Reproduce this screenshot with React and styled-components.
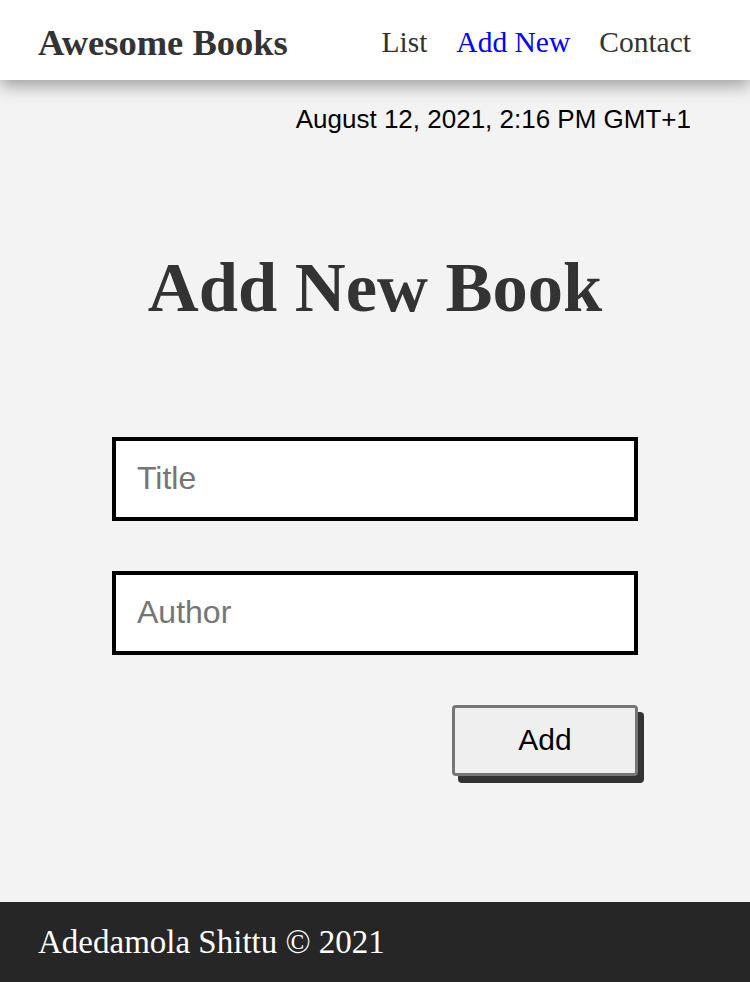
import React from "react";
import styled, { createGlobalStyle } from "styled-components";

const Global = createGlobalStyle`
  * { box-sizing: border-box; }
  html, body { margin: 0; padding: 0; }
  body { background: #f3f3f3; font-family: "Liberation Serif", Georgia, serif; }
`;

const Page = styled.div`
  min-height: 100vh;
  display: flex;
  flex-direction: column;
`;

const Header = styled.header`
  height: 80px;
  background: #fff;
  display: flex;
  align-items: center;
  justify-content: space-between;
  padding: 4px 59px 0 38px;
  box-shadow: 0 6px 16px rgba(0, 0, 0, 0.35);
  position: relative;
  z-index: 1;
`;

const Logo = styled.h1`
  margin: 0;
  font-family: "Liberation Serif", serif;
  font-weight: 700;
  font-size: 36.5px;
  color: #333;
`;

const Nav = styled.nav`
  display: flex;
  gap: 29px;
`;

const NavLink = styled.a`
  font-family: "Liberation Serif", serif;
  font-size: 29.5px;
  color: ${(p) => (p.$active ? "#0000ff" : "#333")};
  text-decoration: none;
`;

const Main = styled.main`
  flex: 1;
  padding: 0 59px 0 38px;
  display: flex;
  flex-direction: column;
`;

const DateLine = styled.p`
  margin: 24px 0 0;
  text-align: right;
  font-family: "Liberation Sans", Arial, sans-serif;
  font-size: 26px;
  color: #000;
`;

const Heading = styled.h2`
  margin: 117px 0 0;
  text-align: center;
  font-family: "Liberation Serif", serif;
  font-weight: 700;
  font-size: 70.5px;
  line-height: 1;
  color: #333;
  padding-left: 21px;
`;

const Form = styled.form`
  align-self: center;
  margin: 114px 0 0 21px;
  width: 526px;
  display: flex;
  flex-direction: column;
  gap: 50px;
`;

const Input = styled.input`
  height: 84px;
  border: 4px solid #000;
  background: #fff;
  padding: 0 21px;
  font-family: "Liberation Sans", Arial, sans-serif;
  font-size: 32px;
  color: #000;
  outline: none;
  &::placeholder { color: #757575; }
`;

const ButtonRow = styled.div`
  display: flex;
  justify-content: flex-end;
`;

const Button = styled.button`
  width: 186px;
  height: 71px;
  border: 3px solid #767676;
  border-radius: 4px;
  background: #efefef;
  box-shadow: 6px 7px 0 #333;
  font-family: "Liberation Sans", Arial, sans-serif;
  font-size: 30px;
  color: #000;
  cursor: pointer;
`;

const Footer = styled.footer`
  height: 80px;
  background: #262626;
  display: flex;
  align-items: center;
  padding-left: 38px;
  font-family: "Liberation Serif", serif;
  font-size: 33px;
  color: #fff;
`;

export default function App() {
  return (
    <Page>
      <Global />
      <Header>
        <Logo>Awesome Books</Logo>
        <Nav>
          <NavLink href="#list">List</NavLink>
          <NavLink href="#add" $active>Add New</NavLink>
          <NavLink href="#contact">Contact</NavLink>
        </Nav>
      </Header>
      <Main>
        <DateLine>August 12, 2021, 2:16 PM GMT+1</DateLine>
        <Heading>Add New Book</Heading>
        <Form onSubmit={(e) => e.preventDefault()}>
          <Input placeholder="Title" />
          <Input placeholder="Author" />
          <ButtonRow>
            <Button type="submit">Add</Button>
          </ButtonRow>
        </Form>
      </Main>
      <Footer>Adedamola Shittu © 2021</Footer>
    </Page>
  );
}
